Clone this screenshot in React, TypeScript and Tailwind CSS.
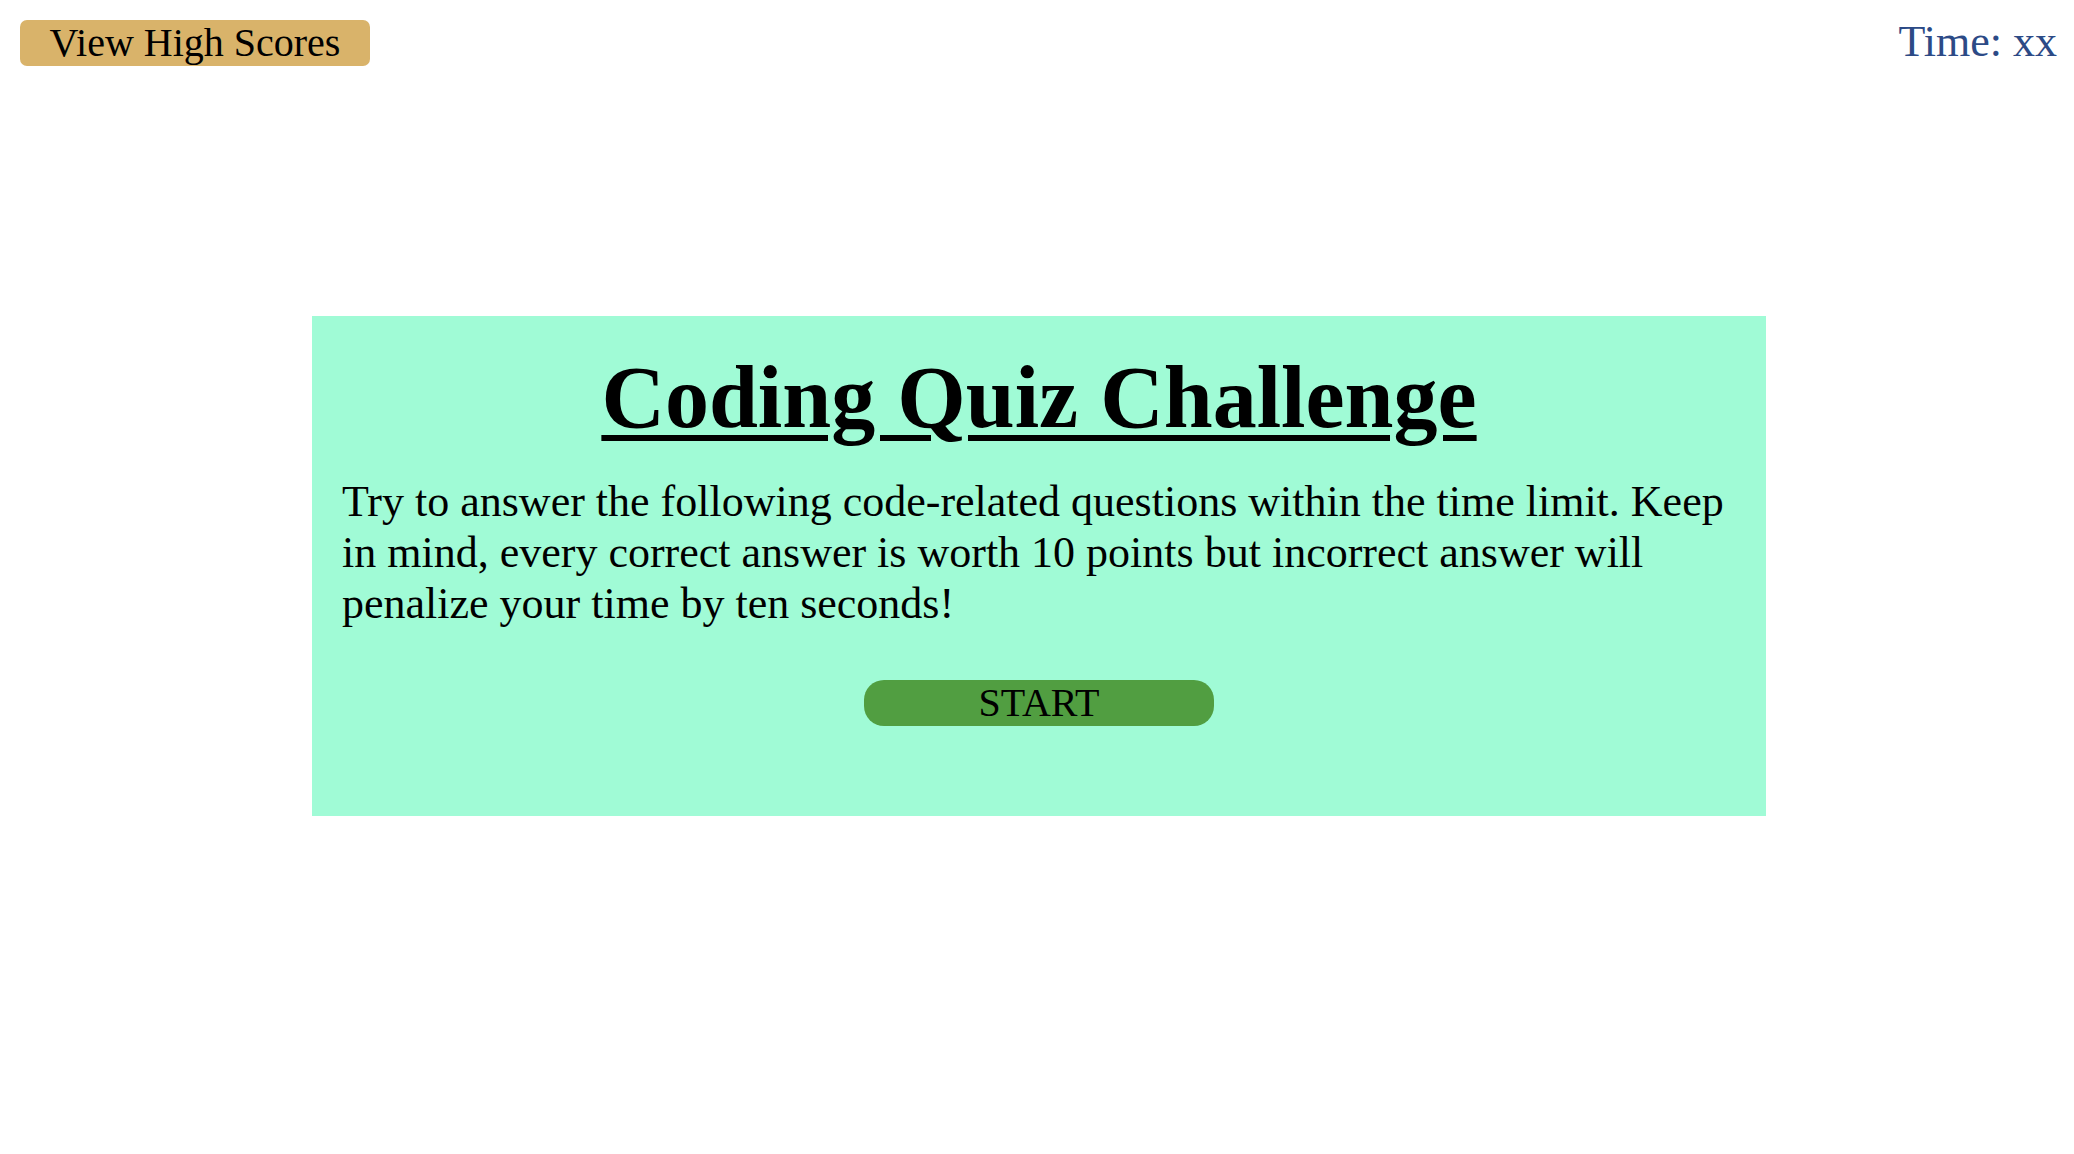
import React from "react";

export default function App() {
  return (
    <div
      className="min-h-screen w-full bg-white"
      style={{ fontFamily: '"Liberation Serif", "Times New Roman", serif' }}
    >
      <header className="flex h-[66px] items-start justify-between pl-[20px] pr-[17px] pt-[20px]">
        <button className="h-[46px] w-[350px] rounded-[7px] bg-[#d9b36a] text-[40px] leading-[46px] text-black">
          View High Scores
        </button>
        <div className="mt-[-3px] text-[44px] leading-[50px] text-[#2c4a86]">Time: xx</div>
      </header>
      <main className="ml-[312px] mt-[250px] flex h-[500px] w-[1454px] flex-col items-center bg-[#a0fbd6] px-[30px] pt-[31px]">
        <h1 className="text-center text-[88px] font-bold leading-[101px] text-black underline decoration-[6px] underline-offset-[8px]">
          Coding Quiz Challenge
        </h1>
        <p className="mt-[28px] w-full text-left text-[44px] leading-[51px] text-black">
          Try to answer the following code-related questions within the time limit. Keep in mind, every correct answer is worth 10 points but incorrect answer will penalize your time by ten seconds!
        </p>
        <button className="mt-[51px] h-[46px] w-[350px] rounded-[20px] bg-[#519e41] text-[40px] leading-[46px] text-black">
          START
        </button>
      </main>
    </div>
  );
}
